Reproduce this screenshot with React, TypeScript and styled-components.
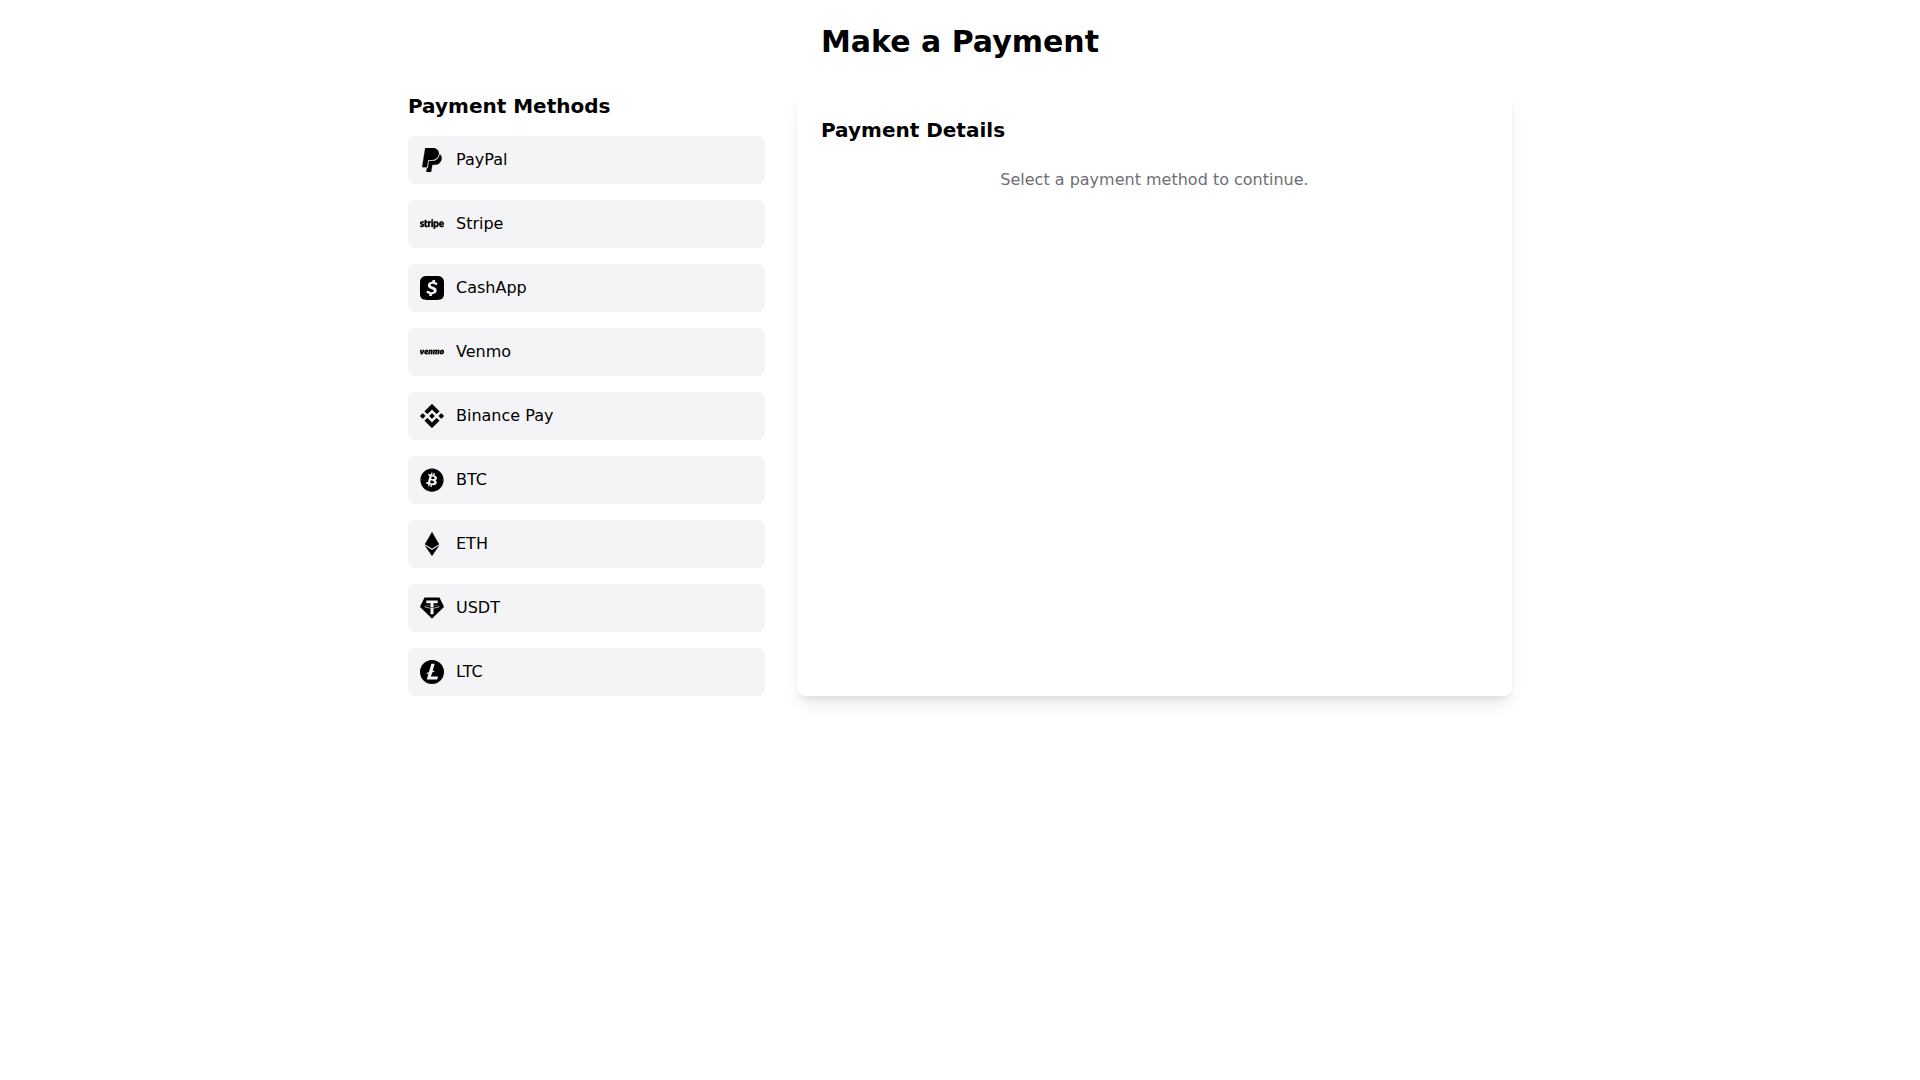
import styled, { createGlobalStyle } from "styled-components";
import { FaStripe, FaEthereum, FaBitcoin } from "react-icons/fa";
import { SiPaypal, SiCashapp, SiVenmo, SiBinance, SiTether, SiLitecoin } from "react-icons/si";
import type { IconType } from "react-icons";

const GlobalStyle = createGlobalStyle`
  * {
    box-sizing: border-box;
  }
  body {
    margin: 0;
    background: #fff;
    color: #000;
    font-family: "DejaVu Sans", sans-serif;
  }
`;

const Container = styled.div`
  max-width: 1152px;
  margin: 0 auto;
  padding: 24px;
`;
const Title = styled.h1`
  margin: 0 0 32px;
  font-size: 30px;
  line-height: 36px;
  font-weight: 700;
  text-align: center;
`;
const Columns = styled.div`
  display: grid;
  grid-template-columns: 357px 1fr;
  gap: 32px;
`;
const Heading = styled.h2`
  margin: 0 0 16px;
  font-size: 20px;
  line-height: 28px;
  font-weight: 700;
`;
const MethodList = styled.div`
  display: flex;
  flex-direction: column;
  gap: 16px;
`;
const Method = styled.button`
  display: flex;
  align-items: center;
  gap: 12px;
  width: 100%;
  padding: 12px;
  border: 0;
  border-radius: 8px;
  background: #f4f4f6;
  color: #000;
  font: inherit;
  font-size: 16px;
  line-height: 24px;
  text-align: left;
`;
const IconSlot = styled.span<{ $weight: number }>`
  display: flex;
  flex: none;

  & svg {
    stroke: currentColor;
    stroke-width: ${(props) => props.$weight};
  }
`;
const Panel = styled.section`
  padding: 24px;
  border-radius: 8px;
  background: #fff;
  box-shadow: 0 10px 15px -3px rgba(0, 0, 0, 0.1), 0 4px 6px -4px rgba(0, 0, 0, 0.1);
`;
const PanelHeading = styled(Heading)`
  margin-bottom: 24px;
`;
const Hint = styled.p`
  margin: 0;
  color: #6e6e73;
  font-size: 16px;
  line-height: 24px;
  text-align: center;
`;

// weights are in each icon's own viewBox units
const methods: { name: string; icon: IconType; weight: number }[] = [
  { name: "PayPal", icon: SiPaypal, weight: 0.2 },
  { name: "Stripe", icon: FaStripe, weight: 5 },
  { name: "CashApp", icon: SiCashapp, weight: 0 },
  { name: "Venmo", icon: SiVenmo, weight: 0.25 },
  { name: "Binance Pay", icon: SiBinance, weight: 0.25 },
  { name: "BTC", icon: FaBitcoin, weight: 0 },
  { name: "ETH", icon: FaEthereum, weight: 4 },
  { name: "USDT", icon: SiTether, weight: 0 },
  { name: "LTC", icon: SiLitecoin, weight: 0 },
];

const App = () => {
  return (
    <>
      <GlobalStyle />
      <Container>
        <Title>Make a Payment</Title>
        <Columns>
          <div>
            <Heading>Payment Methods</Heading>
            <MethodList>
              {methods.map((method) => (
                <Method key={method.name}>
                  <IconSlot $weight={method.weight}>
                    <method.icon size={24} />
                  </IconSlot>
                  {method.name}
                </Method>
              ))}
            </MethodList>
          </div>
          <Panel>
            <PanelHeading>Payment Details</PanelHeading>
            <Hint>Select a payment method to continue.</Hint>
          </Panel>
        </Columns>
      </Container>
    </>
  );
};

export default App;
